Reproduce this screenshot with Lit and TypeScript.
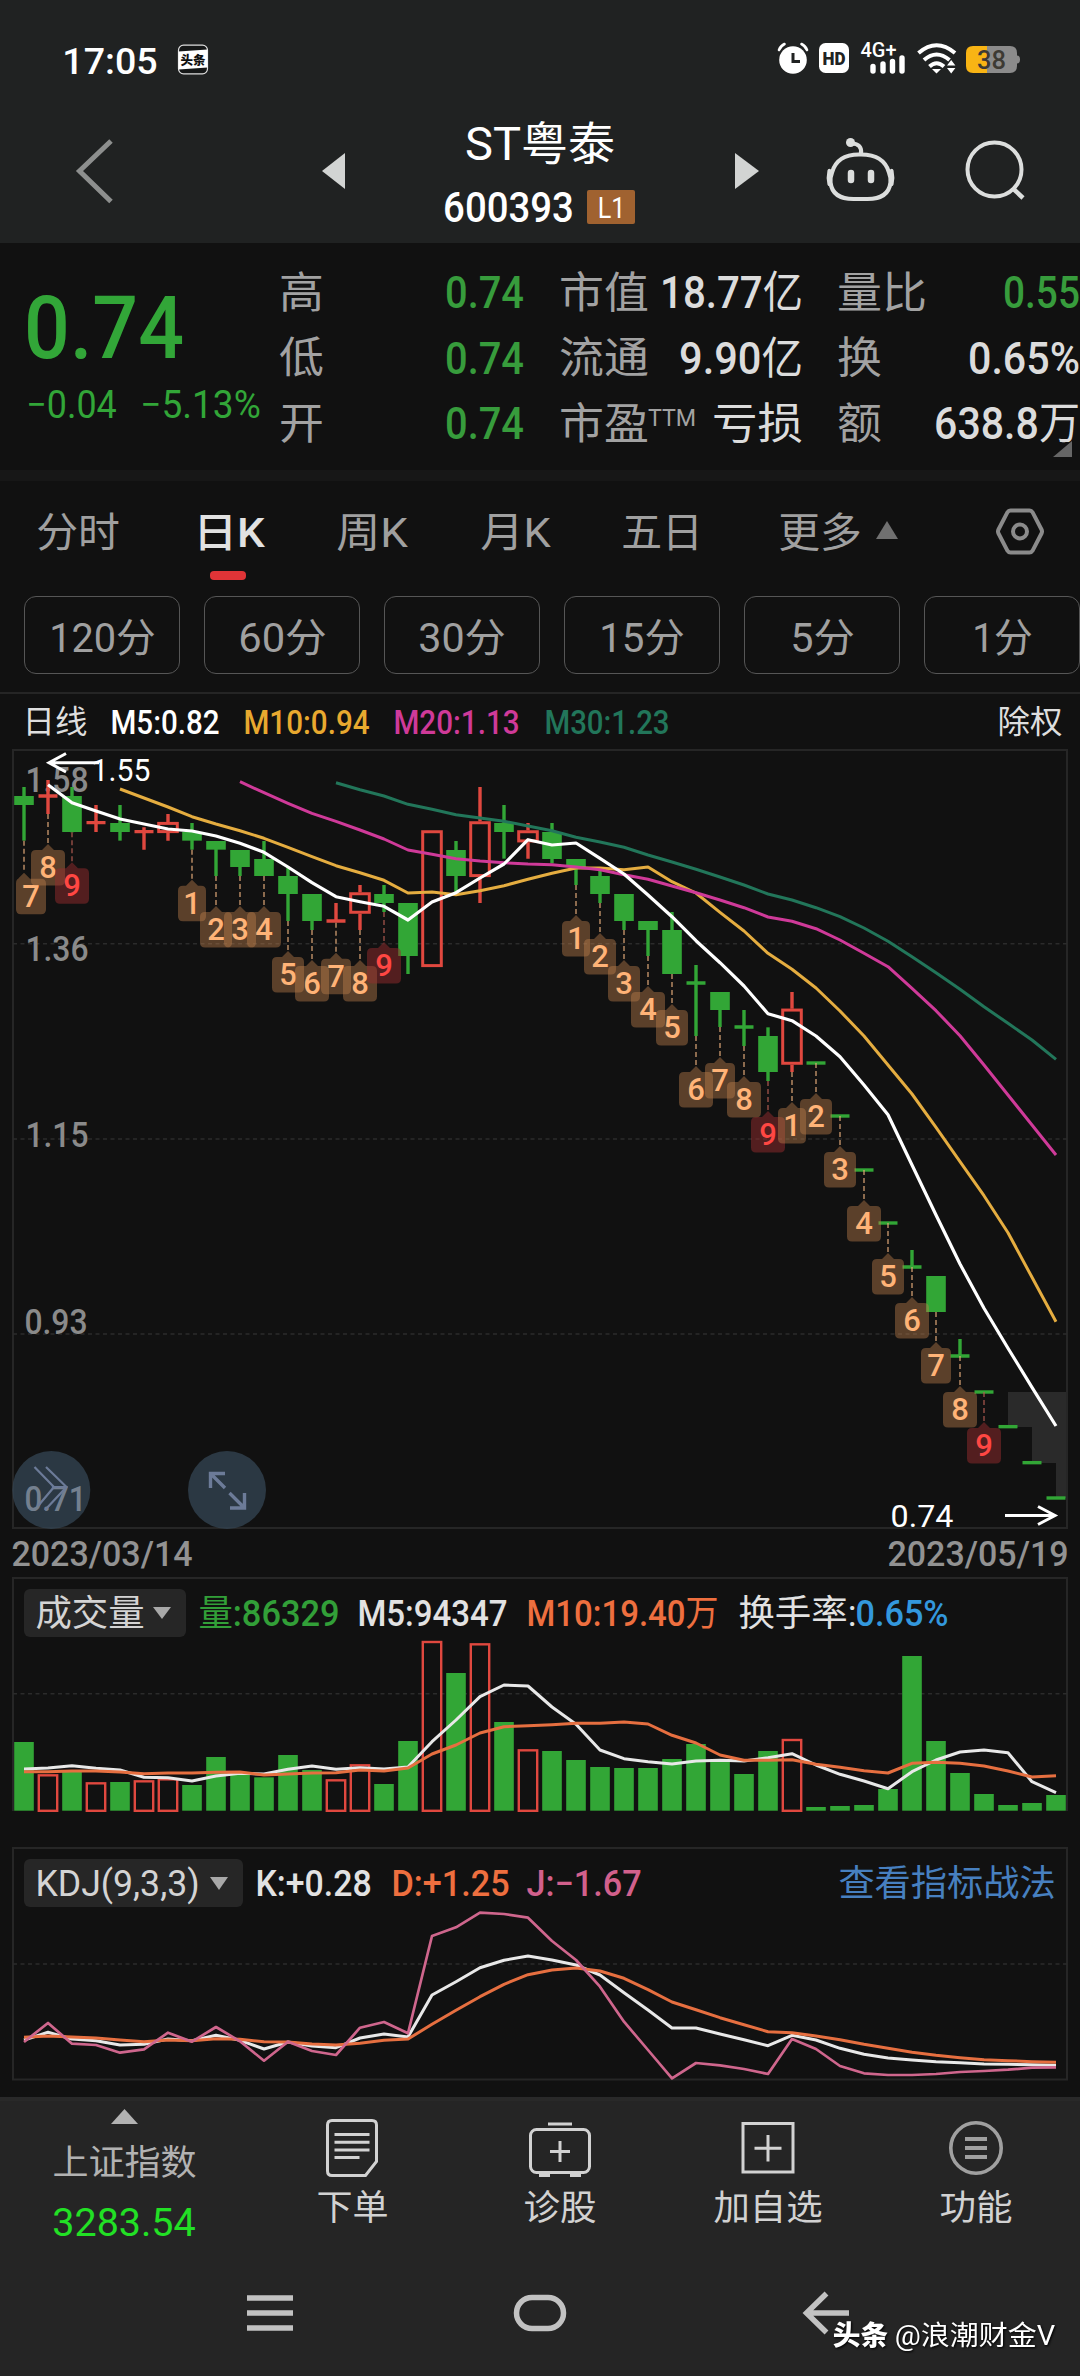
import { LitElement, html, svg, css } from "lit";
import { customElement } from "lit/decorators.js";

const GREEN = "#32a636";
const RED = "#e0483f";

/** Units written in Chinese stay at regular weight beside medium digits. */
const runs = (text: string) =>
  text.split(/([\u4e00-\u9fff]+)/).filter(Boolean).map((part) =>
    /[\u4e00-\u9fff]/.test(part) ? svg`<tspan class="han">${part}</tspan>` : svg`<tspan>${part}</tspan>`);

/** Text run condensed to an exact width, with its capitals centred vertically. */
const fit = (text: string, width: number, size: number, cls = "", line = size) => html`<svg
  class="fit ${cls}" width=${width} height=${line} viewBox="0 0 ${width} ${line}">
  <text x=${-0.045 * size} y=${line / 2 + 0.355 * size} font-size=${size}
    textLength=${width + 0.09 * size} lengthAdjust="spacingAndGlyphs">${runs(text)}</text>
</svg>`;

const label = (text: string, x: number, y: number, width: number, size: number, cls: string) => svg`<text
  class=${cls} x=${x - 0.045 * size} y=${y} font-size=${size}
  textLength=${width + 0.09 * size} lengthAdjust="spacingAndGlyphs">${text}</text>`;

const cx = (i: number) => 24 + 24 * i;

const line = (start: number, values: number[], base: number, cls: string) => svg`<polyline
  class="line ${cls}" points=${values.map((v, k) => `${cx(start + k)},${(base + v / 3).toFixed(1)}`).join(" ")}></polyline>`;

// [kind, high, low, bodyTop, bodyBottom] in thirds of a pixel
type Candle = [string, number, number, number, number];
const CANDLES: Candle[] = [
  ["g", 141, 302, 168, 195], ["r", 120, 222, 168, 168], ["g", 141, 277, 168, 276], ["r", 195, 276, 248, 248],
  ["g", 195, 302, 249, 276], ["r", 262, 329, 275, 275], ["r", 222, 302, 246, 279], ["g", 249, 329, 276, 302],
  ["g", 303, 408, 303, 329], ["g", 330, 408, 330, 381], ["g", 303, 408, 357, 408], ["g", 381, 543, 408, 462],
  ["g", 462, 570, 462, 543], ["r", 489, 548, 543, 543], ["r", 435, 570, 457, 521], ["g", 435, 516, 462, 489],
  ["g", 489, 702, 489, 648], ["r", 271, 681, 271, 681], ["g", 303, 460, 330, 408], ["r", 141, 489, 244, 411],
  ["g", 195, 356, 249, 276], ["r", 249, 356, 271, 307], ["g", 249, 370, 276, 357], ["g", 357, 435, 357, 381],
  ["g", 392, 489, 408, 462], ["g", 462, 570, 462, 543], ["g", 543, 648, 543, 570], ["g", 516, 702, 570, 702],
  ["g", 675, 888, 729, 729], ["g", 756, 861, 756, 810], ["g", 810, 918, 861, 861], ["g", 862, 1023, 888, 996],
  ["r", 756, 996, 806, 974], ["g", 969, 969, 969, 969], ["g", 1128, 1128, 1128, 1128], ["g", 1290, 1290, 1290, 1290],
  ["g", 1449, 1449, 1449, 1449], ["g", 1530, 1581, 1581, 1581], ["g", 1608, 1716, 1608, 1716],
  ["g", 1797, 1848, 1848, 1848], ["g", 1956, 1956, 1956, 1956], ["g", 2060, 2060, 2060, 2060],
  ["g", 2168, 2168, 2168, 2168], ["g", 2274, 2274, 2274, 2274],
];

// candle index -> sequence number
const TAGS: [number, number][] = [
  [0, 7], [1, 8], [2, 9], [7, 1], [8, 2], [9, 3], [10, 4], [11, 5], [12, 6], [13, 7], [14, 8], [15, 9],
  [23, 1], [24, 2], [25, 3], [26, 4], [27, 5], [28, 6], [29, 7], [30, 8], [31, 9],
  [32, 1], [33, 2], [34, 3], [35, 4], [36, 5], [37, 6], [38, 7], [39, 8], [40, 9],
];

const MA5 = [134, 188, 213, 237, 252, 267, 273, 288, 310, 337, 381, 428, 470, 485, 499, 540, 486, 458, 414, 372, 299,
  315, 309, 355, 402, 465, 530, 602, 668, 738, 821, 842, 888, 950, 1035, 1124, 1275, 1425, 1572, 1705, 1825, 1942, 2058];
const MA10 = [147, 174, 201, 230, 252, 272, 295, 322, 350, 377, 398, 421, 459, 456, 464, 452, 437, 418, 400, 384, 384,
  389, 381, 425, 459, 517, 573, 640, 688, 744, 813, 888, 975, 1062, 1162, 1265, 1367, 1478, 1612, 1745];
const MA20 = [125, 158, 190, 220, 244, 270, 297, 330, 343, 356, 363, 368, 372, 374, 381, 389, 404, 418, 438, 458, 480,
  503, 531, 544, 566, 600, 640, 680, 745, 812, 887, 975, 1065, 1155, 1245];
const MA30 = [128, 149, 168, 193, 208, 224, 234, 244, 258, 272, 292, 306, 322, 345, 366, 388, 411, 435, 462, 480, 503,
  530, 564, 604, 650, 698, 748, 800, 850, 900, 958];

const VOLUMES = [516, 613, 604, 637, 636, 631, 625, 645, 561, 613, 622, 555, 600, 628, 583, 642, 513, 213, 309, 220, 456,
  538, 543, 570, 591, 594, 594, 567, 522, 573, 612, 543, 507, 711, 708, 705, 657, 258, 513, 609, 672, 705, 699, 675];
const VOL5 = [597, 594, 587, 595, 600, 622, 623, 633, 618, 610, 612, 598, 588, 598, 593, 597, 591, 515, 450, 380, 345,
  348, 411, 463, 540, 566, 575, 582, 573, 571, 573, 563, 551, 585, 613, 633, 656, 605, 570, 546, 540, 548, 635, 668];
const VOL10 = [605, 605, 603, 603, 606, 611, 609, 609, 607, 606, 615, 612, 609, 608, 600, 603, 594, 552, 525, 489, 470,
  467, 464, 460, 460, 456, 462, 496, 519, 555, 571, 571, 569, 583, 592, 602, 609, 580, 577, 580, 588, 603, 621, 617];

const K = [630, 607, 627, 632, 645, 643, 627, 632, 616, 631, 657, 636, 648, 653, 624, 612, 621, 495, 455, 413, 391, 378,
  390, 405, 435, 488, 540, 594, 594, 612, 629, 647, 616, 630, 655, 673, 684, 690, 695, 698, 702, 703, 704, 706];
const D = [622, 618, 621, 624, 630, 635, 630, 632, 626, 628, 635, 636, 642, 645, 640, 631, 627, 583, 541, 500, 463, 434,
  420, 414, 423, 445, 479, 516, 539, 563, 584, 605, 608, 618, 629, 643, 655, 667, 676, 683, 689, 692, 695, 697];
const J = [636, 579, 641, 645, 668, 658, 608, 635, 591, 634, 692, 635, 663, 675, 593, 576, 610, 318, 292, 248, 252, 263,
  333, 390, 470, 575, 660, 745, 699, 706, 717, 732, 627, 657, 708, 730, 735, 735, 732, 726, 723, 719, 713, 712];

const base = css`
  :host { display: block; font-family: Roboto, "Noto Sans CJK SC", sans-serif; }
  svg { display: block; flex: none; }
  .fit { overflow: visible; }
  text { font-family: Roboto, "Noto Sans CJK SC", sans-serif; fill: currentColor; }
  .m text, text.m { font-weight: 500; }
  .han { font-weight: 400; }
  .h .han { font-weight: 500; }
  .line { fill: none; stroke-width: 3; stroke-linejoin: round; }
  .white { stroke: #fff; stroke-width: 3.200; }
  .pale { stroke: #e8e8e8; }
  .yellow { stroke: #e5ad40; }
  .magenta { stroke: #cf3a99; }
  .teal { stroke: #22765a; }
  .orange { stroke: #e66f40; }
  .pink { stroke: #cf668d; stroke-width: 2.700; }
  .frame { fill: none; stroke: #262626; stroke-width: 2; }
  .dash { stroke: #2b2b2b; stroke-width: 1.6; stroke-dasharray: 4 3.5; }
  .g { color: #329f38; }
`;

@customElement("status-bar")
class StatusBar extends LitElement {
  static styles = [base, css`
    .bar { display: flex; align-items: center; height: 120px; padding: 0 54px 0 64px; color: #fff; }
    .app { margin-left: 21px; }
    .icons { margin-left: auto; overflow: visible; }
    .heavy { font-weight: 900; }
    .tiny { fill: #111; }
    .cut { fill: #202222; }
    .level { fill: #3d3a33; }
  `];
  render() {
    return html`<div class="bar">
      ${fit("17:05", 92, 37, "m")}
      <svg class="app" width="32" height="32" viewBox="0 0 32 32">
        <rect x="1.5" y="1.2" width="29" height="28.6" rx="5" fill="#151717" stroke="#ddd" stroke-width="1.2"></rect>
        <path d="M1.5 7.5 30.5 5.5v18l-29 2z" fill="#fff"></path>
        <text class="heavy tiny" x="3.5" y="20.5" font-size="12.5" textLength="25">头条</text>
      </svg>
      <svg class="icons" width="250" height="36" viewBox="776 42 250 36">
        <circle cx="793" cy="60" r="13.8" fill="#fff"></circle>
        <path d="M779 50q1.500-4 5.500-6M807 50q-1.500-4-5.500-6" stroke="#fff" stroke-width="2.600" fill="none" stroke-linecap="round"></path>
        <path d="M793 53v8.500h7" fill="none" stroke="#202222" stroke-width="3"></path>
        <rect x="819" y="43" width="30" height="30" rx="6.500" fill="#fff"></rect>
        <text class="heavy cut" x="822.500" y="65" font-size="19" textLength="23" lengthAdjust="spacingAndGlyphs">HD</text>
        <text class="m" x="860.500" y="57" font-size="19.500" textLength="36" lengthAdjust="spacingAndGlyphs">4G+</text>
        <path d="M873 71v-4.500M883 71v-7M892.500 71v-9.500M902 71v-13" stroke="#fff" stroke-width="5.400" stroke-linecap="round"></path>
        <g fill="none" stroke="#fff" stroke-width="4">
          <path d="M918.500 53q18-15.500 36.500 0"></path>
          <path d="M924 60q12.500-11 25.500 0"></path>
          <path d="M929.500 66.500q7-6.500 14.500 0"></path>
        </g>
        <path d="M932 69h9l-4.500 4.500zM947 65.500l4.200-5.500 4.200 5.500zM947 68l4.200 5.500 4.200-5.500z" fill="#fff"></path>
        <path d="M973 46h14v27h-14q-7 0-7-7v-13q0-7 7-7z" fill="#f8b414"></path>
        <path d="M987 46h23q7 0 7 7v2.500q3 0 3 4t-3 4v2.500q0 7-7 7h-23z" fill="#8b8b8b"></path>
        <text x="977" y="69" font-size="25" class="m level" textLength="29" lengthAdjust="spacingAndGlyphs">38</text>
      </svg>
    </div>`;
  }
}

@customElement("stock-header")
class StockHeader extends LitElement {
  static styles = [base, css`
    .head { display: grid; grid-template-columns: 322px 23px 390px 24px 51px 100px 170px; height: 123px; color: #fff; }
    .title { display: flex; flex-direction: column; align-items: center; }
    .code { display: flex; align-items: center; gap: 15px; margin-top: 22px; height: 34px; }
    .level { display: flex; align-items: center; justify-content: center; width: 48px; height: 34px;
      border-radius: 2px; background: #a06230; }
    .robot { grid-column: 6; }
  `];
  render() {
    return html`<div class="head">
      <svg width="322" height="102" viewBox="0 120 322 102">
        <path d="M111 141 79.500 171 111 201.500" fill="none" stroke="#8d8f8e" stroke-width="5"></path>
      </svg>
      <svg width="23" height="102" viewBox="322 120 23 102"><path d="M345 153v36L322 171z" fill="#d2d4d3"></path></svg>
      <div class="title">
        ${fit("ST粤泰", 146, 46, "", 48)}
        <div class="code">${fit("600393", 127, 42, "m", 34)}<span class="level">${fit("L1", 25, 29)}</span></div>
      </div>
      <svg width="24" height="102" viewBox="735 120 24 102"><path d="M735 153v36L759 171z" fill="#d2d4d3"></path></svg>
      <svg class="robot" width="100" height="102" viewBox="810 120 100 102">
        <g fill="none" stroke="#dcdedd" stroke-width="4.200" stroke-linecap="round">
          <path d="M861 154.500h-2q-22 0-27 18-2 5-1.500 10 2 16.500 23 16.500h14q21 0 23-16.500 .5-5-1.500-10-5-18-28-18z"></path>
          <path d="M829.500 171q-1.500 7 0 13M891.500 171q1.500 7 0 13"></path>
          <path d="M861 153q1-9-9-9.500"></path>
        </g>
        <circle cx="850.500" cy="142.500" r="4.500" fill="#dcdedd"></circle>
        <path d="M851 173v7M871 173v7" stroke="#dcdedd" stroke-width="6.500" stroke-linecap="round"></path>
      </svg>
      <svg width="170" height="102" viewBox="910 120 170 102">
        <circle cx="994.500" cy="169.500" r="27" fill="none" stroke="#dcdedd" stroke-width="4"></circle>
        <path d="M1013 188.500 1023 198" stroke="#dcdedd" stroke-width="4.500"></path>
      </svg>
    </div>`;
  }
}

@customElement("quote-panel")
class QuotePanel extends LitElement {
  static styles = [base, css`
    .quote { position: relative; display: grid; grid-template-columns: 281px 799px; height: 227px; overflow: hidden; }
    .price { padding: 40px 0 0 28px; color: #32a638; }
    .change { display: flex; gap: 27px; margin-top: 13.500px; }
    .stats { display: grid; grid-template-columns: 241px 240px 238.500px; column-gap: 38.500px; grid-auto-rows: 65.500px;
      padding-top: 16.500px; }
    .cell { display: flex; align-items: center; justify-content: space-between; color: #a2a2a2; }
    .v { color: #dcdcdc; }
    .green { color: #379c3c; }
    .pe { display: flex; align-items: flex-start; gap: 2px; }
    .corner { position: absolute; left: 1053px; top: 198px; }
  `];
  render() {
    return html`<div class="quote">
      <div class="price">
        ${fit("0.74", 152, 88, "m")}
        <div class="change">${fit("−0.04", 87, 39)}${fit("−5.13%", 117, 39)}</div>
      </div>
      <div class="stats">
        <div class="cell">${fit("高", 41, 43)}${fit("0.74", 75, 44, "green m")}</div>
        <div class="cell">${fit("市值", 86, 43)}${fit("18.77亿", 139, 44, "v m")}</div>
        <div class="cell">${fit("量比", 86, 43)}${fit("0.55", 73, 44, "green m")}</div>
        <div class="cell">${fit("低", 41, 43)}${fit("0.74", 75, 44, "green m")}</div>
        <div class="cell">${fit("流通", 86, 43)}${fit("9.90亿", 120, 44, "v m")}</div>
        <div class="cell">${fit("换", 41, 43)}${fit("0.65%", 108, 44, "v m")}</div>
        <div class="cell">${fit("开", 41, 43)}${fit("0.74", 75, 44, "green m")}</div>
        <div class="cell"><span class="pe">${fit("市盈", 86, 43)}${fit("TTM", 46, 24, "", 30)}</span>${fit("亏损", 87, 43, "v")}</div>
        <div class="cell">${fit("额", 41, 43)}${fit("638.8万", 142, 44, "v m")}</div>
      </div>
      <svg class="corner" width="19" height="16" viewBox="0 0 19 16"><path d="M19 0v16H0z" fill="#666"></path></svg>
    </div>`;
  }
}

@customElement("period-tabs")
class PeriodTabs extends LitElement {
  static styles = [base, css`
    .band { height: 11px; background: #171717; }
    .tabs { display: grid; grid-template-columns: 157px 143px 144px 141px 157px 96px 120px 48px; align-items: center;
      height: 102px; padding-left: 38px; color: #a0a0a0; }
    .on { position: relative; color: #e2e2e2; }
    .on::after { content: ""; position: absolute; left: 15px; top: 59px; width: 36px; height: 9px; border-radius: 4px;
      background: #e03437; }
    .pills { display: flex; gap: 24px; padding: 13px 0 18px 24px; }
    .pill { box-sizing: border-box; display: flex; align-items: center; justify-content: center; flex: none;
      width: 156px; height: 78px; border: 1.500px solid #565656; border-radius: 12px; color: #a0a0a0; padding-top: 5px; }
    .averages { box-sizing: border-box; display: grid; grid-template-columns: 88px 133px 150px 151px 453px auto;
      align-items: center; height: 57px; padding-left: 24px; border-top: 2px solid #252525; color: #dedede; }
    .c5 { color: #fff; }
    .c10 { color: #e8a92f; }
    .c20 { color: #cf3a99; }
    .c30 { color: #22765a; }
  `];
  render() {
    const pills: [string, number][] = [["120分", 103], ["60分", 85], ["30分", 84], ["15分", 82], ["5分", 61], ["1分", 57]];
    return html`<div class="band"></div>
      <div class="tabs">
        ${fit("分时", 80, 41)}
        <span class="on">${fit("日K", 68, 41, "m h")}</span>
        ${fit("周K", 68, 41)}${fit("月K", 67, 41)}${fit("五日", 78, 41)}${fit("更多", 80, 41)}
        <svg width="22" height="24" viewBox="0 0 22 24"><path d="M11 1 22 19H0z" fill="#707070"></path></svg>
        <svg width="48" height="48" viewBox="0 0 48 48" fill="none" stroke="#8b8b8b" stroke-width="4">
          <path d="M14.500 2.500h19q2 0 3 1.700l9 17.300q1 2 0 4l-9 17.300q-1 1.700-3 1.700h-19q-2 0-3-1.700l-9-17.300q-1-2 0-4l9-17.300q1-1.700 3-1.700z"></path>
          <circle cx="24" cy="23.500" r="7"></circle>
        </svg>
      </div>
      <div class="pills">${pills.map(([t, w]) => html`<div class="pill">${fit(t, w, 40)}</div>`)}</div>
      <div class="averages">
        ${fit("日线", 62, 32)}${fit("M5:0.82", 106, 34, "c5 m")}${fit("M10:0.94", 123, 34, "c10 m")}
        ${fit("M20:1.13", 123, 34, "c20 m")}${fit("M30:1.23", 122, 34, "c30 m")}${fit("除权", 62, 32)}
      </div>`;
  }
}

const Y = (v: number) => 740 + v / 3;

@customElement("candle-chart")
class CandleChart extends LitElement {
  static styles = [base, css`
    .axis { fill: #8a8a8a; font-weight: 500; }
    .low { fill: #74808f; }
    .mark { fill: #fff; }
    .arrow { fill: none; stroke: #fff; stroke-width: 3; }
    .tag { fill: rgba(190, 128, 76, 0.43); }
    .tag.hot { fill: rgba(150, 44, 46, 0.5); }
    .num { fill: #ffb377; font-weight: 500; text-anchor: middle; }
    .num.hot { fill: #ff4743; }
    .drop { stroke: #e0a878; stroke-width: 1.200; stroke-dasharray: 5 3; }
    .drop.hot { stroke: #b05a50; }
    .float { fill: rgba(52, 70, 84, 0.75); }
    .icon { fill: none; stroke: #6c7b98; stroke-width: 3.400; }
    .thin { stroke-width: 2.200; }
    .dates { display: flex; align-items: center; justify-content: space-between; height: 47px; padding: 0 13px;
      color: #929292; }
  `];

  candle([kind, high, low, top, bottom]: Candle, i: number) {
    const x = cx(i);
    const c = kind === "g" ? GREEN : RED;
    if (bottom === top) {
      return svg`<path d="M${x - 9.500} ${Y(top)}h19M${x} ${Y(high)}V${Y(low)}" stroke=${c} stroke-width="3.400"></path>`;
    }
    if (kind === "g") {
      return svg`<path d="M${x} ${Y(high)}V${Y(low)}" stroke=${c} stroke-width="3.400"></path>
        <rect x=${x - 9.800} y=${Y(top)} width="19.600" height=${(bottom - top) / 3} fill=${c}></rect>`;
    }
    return svg`<path d="M${x} ${Y(high)}V${Y(top)}M${x} ${Y(bottom)}V${Y(low)}" stroke=${c} stroke-width="3.400"></path>
      <rect x=${x - 9.300} y=${Y(top) + 1.400} width="18.600" height=${(bottom - top) / 3 - 2.800} fill="none" stroke=${c} stroke-width="3"></rect>`;
  }

  tag([i, n]: [number, number]) {
    const low = Y(CANDLES[i][2]);
    const tip = low + (i === 0 ? 32 : 30);
    const w = n === 1 ? 28 : n === 7 ? 30 : [2, 3, 5].includes(n) ? 32 : 34;
    const x = cx(i);
    const mid = Math.max(x, 16 + w / 2);
    const l = mid - w / 2, r = mid + w / 2, t = tip + 6, b = tip + 41.500;
    const hot = n === 9 ? "hot" : "";
    return svg`<path class="drop ${hot}" d="M${x} ${low}V${tip}"></path>
      <path class="tag ${hot}" d="M${x} ${tip}L${x + 6} ${t}H${r - 5}Q${r} ${t} ${r} ${t + 5}V${b - 5}Q${r} ${b} ${r - 5} ${b}H${l + 5}Q${l} ${b} ${l} ${b - 5}V${t + 5}Q${l} ${t} ${Math.min(l + 5, x - 5)} ${t}H${x - 6}Z"></path>
      <text class="num ${hot}" x=${mid} y=${tip + 34} font-size="31">${n}</text>`;
  }

  render() {
    return html`<svg width="1080" height="781" viewBox="0 749 1080 781">
        <path d="M1008 1392H1067V1498H1056V1463H1032V1427H1008Z" fill="#2a2a2a"></path>
        <rect class="frame" x="13" y="750" width="1054" height="778"></rect>
        <path class="dash" d="M13 943.700H1067M13 1139H1067M13 1334H1067"></path>
        ${label("1.58", 27, 792, 60, 35, "axis")}${label("1.36", 27, 961, 60, 35, "axis")}
        ${label("1.15", 27, 1147, 60, 35, "axis")}${label("0.93", 26, 1334, 60, 35, "axis")}
        ${CANDLES.map((c, i) => this.candle(c, i))}
        ${TAGS.map((t) => this.tag(t))}
        ${line(13, MA30, 740, "teal")}${line(4, MA10, 740, "yellow")}${line(9, MA20, 740, "magenta")}${line(1, MA5, 740, "white")}
        ${label("1.55", 93, 781, 56, 31, "mark")}
        <path class="arrow" d="M99 762.700H49M66 753.500 49 762.700 66 772"></path>
        ${label("0.74", 892, 1526.500, 60, 31.500, "mark")}
        <path class="arrow" d="M1005 1515.500H1055M1038 1506.500 1055 1515.500 1038 1524.500"></path>
        <circle class="float" cx="51.300" cy="1490" r="39"></circle>
        <circle class="float" cx="227" cy="1490" r="39"></circle>
        ${label("0.71", 26, 1511, 59, 35, "low m")}
        <path class="icon thin" d="M34.500 1467 54 1487 38 1506M46 1467 66.500 1487 45 1510M54 1487h12.500"></path>
        <path class="icon" d="M225 1473.500H210.500V1488M210.500 1473.500 225 1488M229.500 1493 244.500 1508M230 1508H244.500V1493"></path>
      </svg>
      <div class="dates">${fit("2023/03/14", 178, 35, "m")}${fit("2023/05/19", 178, 35, "m")}</div>`;
  }
}

const panel = css`
  .panel { display: grid; }
  .plot, .legend { grid-area: 1 / 1; }
  .legend { display: grid; align-items: center; align-self: start; height: 48px; margin: 12px 0 0 24px; color: #e2e2e2; }
  .chip { box-sizing: border-box; display: flex; align-items: center; justify-content: space-between; height: 48px;
    padding: 0 15px 0 13px; border-radius: 6px; background: #262626; color: #d4d4d4; }
  .or { color: #ee6f3f; }
`;

@customElement("volume-panel")
class VolumePanel extends LitElement {
  static styles = [base, panel, css`
    .legend { grid-template-columns: 162px 14px 159px 169px 212px 117px auto; }
    .vol { grid-column: 3; }
    .blue { color: #3398dd; }
  `];
  render() {
    return html`<div class="panel">
      <svg class="plot" width="1080" height="236" viewBox="0 1577 1080 236">
        <path class="frame" d="M13 1811V1578H1067V1811"></path>
        <path class="dash" d="M13 1693.700H1067"></path>
        ${VOLUMES.map((v, i) => {
          const y = 1570 + v / 3;
          return CANDLES[i][0] === "g"
            ? svg`<rect x=${cx(i) - 9.800} y=${y} width="19.600" height=${1810.700 - y} fill=${GREEN}></rect>`
            : svg`<rect x=${cx(i) - 9.200} y=${y + 1} width="18.400" height=${1809.800 - y} fill="none" stroke=${RED} stroke-width="2.400"></rect>`;
        })}
        ${line(0, VOL5, 1570, "pale")}${line(0, VOL10, 1570, "orange")}
      </svg>
      <div class="legend">
        <div class="chip">${fit("成交量", 106, 36)}<svg width="18" height="12" viewBox="0 0 18 12"><path d="M0 0h18L9 12z" fill="#a8a8a8"></path></svg></div>
        ${fit("量:86329", 138, 36, "vol g m")}${fit("M5:94347", 147, 36, "m")}${fit("M10:19.40万", 189, 36, "or m")}
        ${fit("换手率:", 115, 36)}${fit("0.65%", 90, 36, "blue m")}
      </div>
    </div>`;
  }
}

@customElement("kdj-panel")
class KdjPanel extends LitElement {
  static styles = [base, panel, css`
    .panel { margin: 34px 0 16px; }
    .legend { grid-template-columns: 219px 14px 136px 135px 312px auto; }
    .k { grid-column: 3; }
    .j { color: #d2608c; }
    .link { color: #4780c0; }
  `];
  render() {
    return html`<div class="panel">
      <svg class="plot" width="1080" height="234" viewBox="0 1847 1080 234">
        <rect class="frame" x="13" y="1848" width="1054" height="231.500"></rect>
        <path class="dash" d="M13 1964H1067"></path>
        ${line(0, K, 1830, "pale")}${line(0, D, 1830, "orange")}${line(0, J, 1830, "pink")}
      </svg>
      <div class="legend">
        <div class="chip">${fit("KDJ(9,3,3)", 161, 36)}<svg width="18" height="13" viewBox="0 0 18 13"><path d="M0 0h18L9 13z" fill="#a8a8a8"></path></svg></div>
        ${fit("K:+0.28", 113, 36, "k m")}${fit("D:+1.25", 115, 36, "or m")}${fit("J:−1.67", 112, 36, "j m")}
        ${fit("查看指标战法", 214, 36, "link")}
      </div>
    </div>`;
  }
}

@customElement("bottom-bar")
class BottomBar extends LitElement {
  static styles = [base, css`
    .bottom { position: relative; box-sizing: border-box; height: 279px; border-top: 4px solid #292929; background: #252525; }
    .actions { display: grid; grid-template-columns: 248px repeat(4, 208px); height: 150px; color: #d2d2d2; }
    .index { display: flex; flex-direction: column; align-items: center; padding-top: 8px; color: #b2b2b2; }
    .name { margin-top: 21px; }
    .points { margin-top: 23px; color: #22e025; }
    .action { display: flex; flex-direction: column; align-items: center; gap: 12.500px; padding-top: 16px; }
    .ico { fill: none; stroke: #d2d2d2; stroke-width: 3; }
    .soft { stroke: #a0a0a0; }
    .nav { display: grid; grid-template-columns: 270px 270px 405px; align-items: center; height: 124px; padding-left: 135px; }
    .nav svg { fill: none; stroke: #c2c2c2; stroke-width: 5.500; }
    .mark { position: absolute; left: 834px; top: 216px; display: flex; align-items: center; gap: 9px; color: #fff;
      filter: drop-shadow(1.500px 1.500px 1px #000); }
    .heavy .han { font-weight: 900; }
  `];
  render() {
    return html`<div class="bottom">
      <div class="actions">
        <div class="index">
          <svg width="27" height="15" viewBox="0 0 27 15"><path d="M13.500 0 27 15H0z" fill="#b2b2b2"></path></svg>
          ${fit("上证指数", 141, 35, "name")}${fit("3283.54", 140, 38, "points")}
        </div>
        <div class="action">
          <svg class="ico" width="64" height="60" viewBox="0 0 64 60">
            <path d="M12 3.500h40q4.500 0 4.500 4.500v36.500L45.500 58.500H12q-4.500 0-4.500-4.500V8q0-4.500 4.500-4.500z"></path>
            <path d="M14.500 17.500h35M14.500 25.200h35M14.500 32.900h35M14.500 40.600h25"></path>
          </svg>
          ${fit("下单", 69, 35, "", 36)}
        </div>
        <div class="action">
          <svg class="ico" width="64" height="60" viewBox="0 0 64 60">
            <rect x="2.500" y="12.500" width="59" height="43" rx="6"></rect>
            <path d="M20 7h24M32 24v21M22 34.500h20"></path>
            <path d="M11 58h11M42 58h11" stroke-width="4"></path>
          </svg>
          ${fit("诊股", 70, 35, "", 36)}
        </div>
        <div class="action">
          <svg class="ico" width="64" height="60" viewBox="0 0 64 60">
            <rect x="7" y="6.500" width="50" height="48.500"></rect>
            <path d="M32 18v26.500M18.500 31.200h27"></path>
          </svg>
          ${fit("加自选", 106, 35, "", 36)}
        </div>
        <div class="action">
          <svg class="ico soft" width="64" height="60" viewBox="0 0 64 60">
            <circle cx="32" cy="31" r="25.200" stroke-width="3.600"></circle>
            <path d="M21 22h22M21 31h22M21 40h22" stroke-width="4"></path>
          </svg>
          ${fit("功能", 70, 35, "", 36)}
        </div>
      </div>
      <div class="nav">
        <svg width="270" height="44" viewBox="135 2291 270 44"><path d="M247 2298h46M247 2313h46M247 2328h46"></path></svg>
        <svg width="270" height="44" viewBox="405 2291 270 44"><rect x="516.500" y="2297.500" width="47" height="31" rx="15.500"></rect></svg>
        <svg width="405" height="44" viewBox="675 2291 405 44"><path d="M849 2313H807M826.500 2293.500 806.500 2313 826.500 2332.500"></path></svg>
      </div>
      <div class="mark">${fit("头条", 53, 27, "heavy", 36)}${fit("@浪潮财金V", 158, 27, "", 36)}</div>
    </div>`;
  }
}

@customElement("app-root")
class AppRoot extends LitElement {
  static styles = css`
    :host { display: block; width: 1080px; height: 2376px; overflow: hidden; background: #111;
      font-family: Roboto, "Noto Sans CJK SC", sans-serif; }
    .top { background: #202222; }
  `;
  render() {
    return html`<div class="top"><status-bar></status-bar><stock-header></stock-header></div>
      <quote-panel></quote-panel>
      <period-tabs></period-tabs>
      <candle-chart></candle-chart>
      <volume-panel></volume-panel>
      <kdj-panel></kdj-panel>
      <bottom-bar></bottom-bar>`;
  }
}
